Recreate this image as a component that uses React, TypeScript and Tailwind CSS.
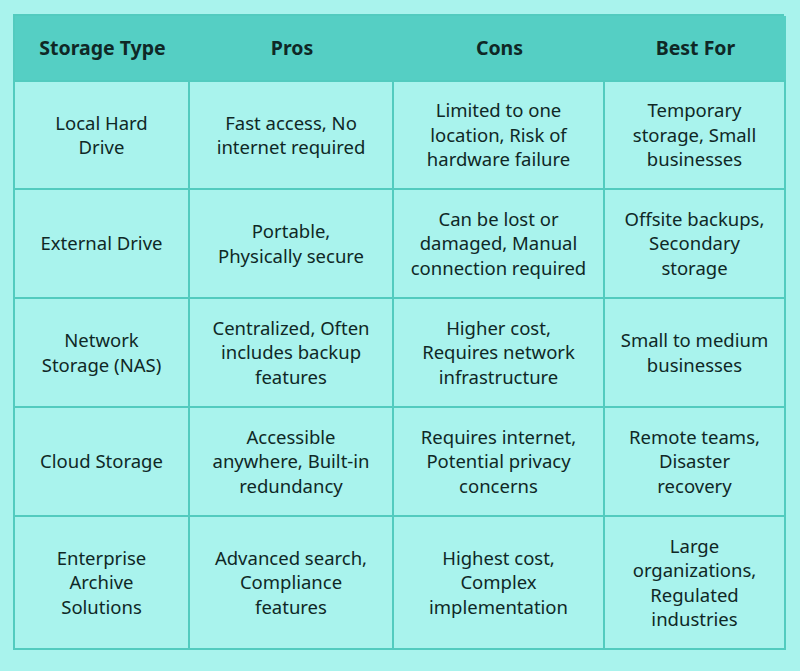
import React from 'react';

const rows: { h: string; cells: string[][] }[] = [
  {
    h: 'h-[108px]',
    cells: [
      ['Local Hard', 'Drive'],
      ['Fast access, No', 'internet required'],
      ['Limited to one', 'location, Risk of', 'hardware failure'],
      ['Temporary', 'storage, Small', 'businesses'],
    ],
  },
  {
    h: 'h-[109px]',
    cells: [
      ['External Drive'],
      ['Portable,', 'Physically secure'],
      ['Can be lost or', 'damaged, Manual', 'connection required'],
      ['Offsite backups,', 'Secondary', 'storage'],
    ],
  },
  {
    h: 'h-[109px]',
    cells: [
      ['Network', 'Storage (NAS)'],
      ['Centralized, Often', 'includes backup', 'features'],
      ['Higher cost,', 'Requires network', 'infrastructure'],
      ['Small to medium', 'businesses'],
    ],
  },
  {
    h: 'h-[109px]',
    cells: [
      ['Cloud Storage'],
      ['Accessible', 'anywhere, Built-in', 'redundancy'],
      ['Requires internet,', 'Potential privacy', 'concerns'],
      ['Remote teams,', 'Disaster', 'recovery'],
    ],
  },
  {
    h: 'h-[133px]',
    cells: [
      ['Enterprise', 'Archive', 'Solutions'],
      ['Advanced search,', 'Compliance', 'features'],
      ['Highest cost,', 'Complex', 'implementation'],
      ['Large', 'organizations,', 'Regulated', 'industries'],
    ],
  },
];

const headers = ['Storage Type', 'Pros', 'Cons', 'Best For'];

export default function App() {
  return (
    <div className="w-[800px] h-[671px] bg-[#a9f3ed] pt-[14px] pl-[13px] font-['Noto_Sans',sans-serif] text-[#0f2826]">
      <div className="w-[771px] grid grid-cols-[175px_204px_211px_181px] border-t-2 border-l-2 border-[#52cbbf]">
        {headers.map((t) => (
          <div
            key={t}
            className="h-[66px] bg-[#55cfc4] flex items-center justify-center text-[19.5px] font-bold border-b-2 border-[#52cbbf] last:border-r-2"
          >
            {t}
          </div>
        ))}
        {rows.map((r, i) =>
          r.cells.map((lines, j) => (
            <div
              key={`${i}-${j}`}
              className={`${r.h} flex flex-col items-center justify-center text-center text-[18.5px] leading-[24.5px] border-r-2 border-b-2 border-[#52cbbf]`}
            >
              {lines.map((l) => (
                <span key={l}>{l}</span>
              ))}
            </div>
          ))
        )}
      </div>
    </div>
  );
}
